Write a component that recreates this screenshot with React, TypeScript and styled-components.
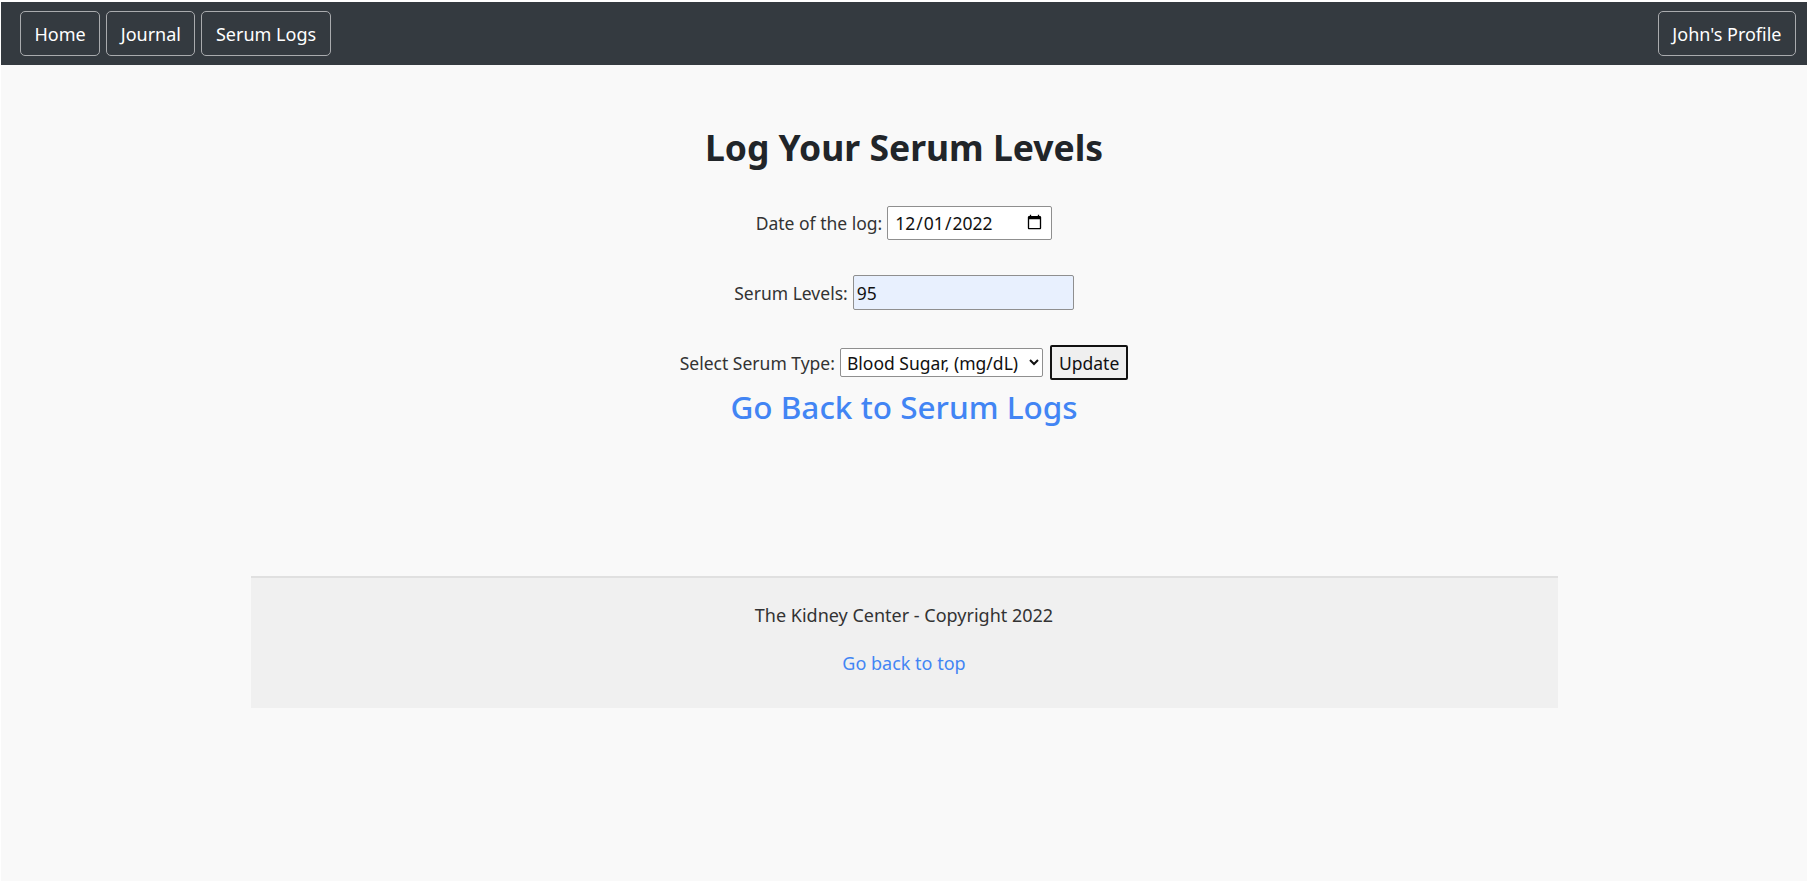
import React from "react";
import styled, { createGlobalStyle } from "styled-components";

const Global = createGlobalStyle`
  html, body { margin: 0; padding: 0; background: #ffffff; }
  body { font-family: "Noto Sans", "Open Sans", Arial, sans-serif; color: #212529; }
  * { box-sizing: border-box; }
`;

const Frame = styled.div`
  margin: 2px 8px 1px 1px;
  height: 879px;
  background: #f9f9f9;
  display: flex;
  flex-direction: column;
`;

const NavBar = styled.nav`
  height: 63px;
  background: #343a40;
  display: flex;
  align-items: center;
  justify-content: space-between;
  padding: 0 11px 0 19px;
`;

const NavGroup = styled.div`
  display: flex;
  gap: 6px;
`;

const NavButton = styled.a`
  height: 45px;
  display: inline-flex;
  align-items: center;
  padding: 0 13.5px;
  border: 1.5px solid #a9abae;
  border-radius: 5px;
  color: #ffffff;
  font-size: 18px;
  text-decoration: none;
`;

const Main = styled.main`
  display: flex;
  flex-direction: column;
  align-items: center;
`;

const Title = styled.h1`
  margin: 59px 0 0;
  font-size: 35.5px;
  line-height: 47px;
  font-weight: 700;
  color: #212529;
`;

const Row = styled.div<{ $top: number }>`
  margin-top: ${(p) => p.$top}px;
  display: flex;
  align-items: center;
  gap: 5px;
  font-size: 17.5px;
  color: #333;
`;

const Label = styled.label`
  white-space: nowrap;
`;

const DateInput = styled.input`
  width: 165px;
  height: 34px;
  border: 1px solid #8f8f8f;
  border-radius: 2px;
  background: #fff;
  font-family: inherit;
  font-size: 17.5px;
  color: #111;
  padding: 0 6px;
`;

const TextInput = styled.input`
  width: 221px;
  height: 35px;
  border: 1px solid #8f8f8f;
  border-radius: 2px;
  background: #e8f0fe;
  font-family: inherit;
  font-size: 17.5px;
  color: #111;
  padding: 0 3px;
`;

const Select = styled.select`
  width: 203px;
  height: 29px;
  border: 1px solid #8f8f8f;
  border-radius: 2px;
  background: #fff;
  font-family: inherit;
  font-size: 17.5px;
  color: #111;
  padding: 0 2px;
`;

const UpdateButton = styled.button`
  height: 35px;
  padding: 0 7px;
  margin-left: 2px;
  border: 2px solid #111;
  border-radius: 2px;
  background: #efefef;
  font-family: inherit;
  font-size: 17.5px;
  color: #111;
`;

const BackLink = styled.a`
  margin-top: 9px;
  font-size: 31.5px;
  line-height: 36px;
  font-weight: 500;
  color: #4285f4;
  text-decoration: none;
`;

const Footer = styled.footer`
  margin: 151px auto 0;
  width: 1307px;
  height: 132px;
  background: #f0f0f0;
  border-top: 2px solid #e0e0e0;
  display: flex;
  flex-direction: column;
  align-items: center;
  padding-top: 25px;
  gap: 24px;
  font-size: 18px;
`;

const FooterText = styled.p`
  margin: 0;
  line-height: 24px;
  color: #333;
`;

const FooterLink = styled.a`
  line-height: 24px;
  color: #4285f4;
  text-decoration: none;
`;

export default function App() {
  return (
    <>
      <Global />
      <Frame>
        <NavBar>
          <NavGroup>
            <NavButton href="#">Home</NavButton>
            <NavButton href="#">Journal</NavButton>
            <NavButton href="#">Serum Logs</NavButton>
          </NavGroup>
          <NavButton href="#">John's Profile</NavButton>
        </NavBar>
        <Main>
          <Title>Log Your Serum Levels</Title>
          <Row $top={35}>
            <Label htmlFor="d">Date of the log:</Label>
            <DateInput id="d" type="date" defaultValue="2022-12-01" />
          </Row>
          <Row $top={35}>
            <Label htmlFor="s">Serum Levels:</Label>
            <TextInput id="s" type="text" defaultValue="95" />
          </Row>
          <Row $top={35}>
            <Label htmlFor="t">Select Serum Type:</Label>
            <Select id="t" defaultValue="bs">
              <option value="bs">Blood Sugar, (mg/dL)</option>
            </Select>
            <UpdateButton>Update</UpdateButton>
          </Row>
          <BackLink href="#">Go Back to Serum Logs</BackLink>
        </Main>
        <Footer>
          <FooterText>The Kidney Center - Copyright 2022</FooterText>
          <FooterLink href="#">Go back to top</FooterLink>
        </Footer>
      </Frame>
    </>
  );
}
